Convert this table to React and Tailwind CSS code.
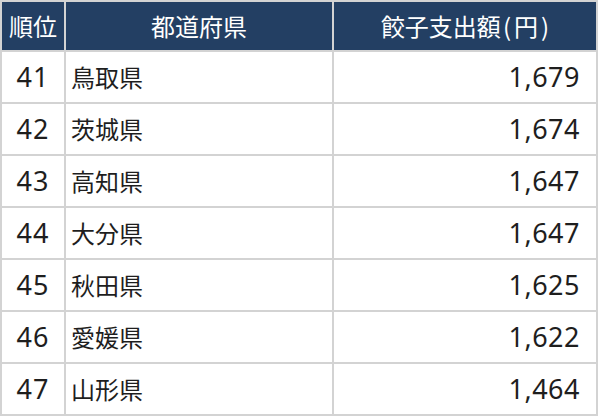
import React from "react";

const rows = [
  ["41", "鳥取県", "1,679"],
  ["42", "茨城県", "1,674"],
  ["43", "高知県", "1,647"],
  ["44", "大分県", "1,647"],
  ["45", "秋田県", "1,625"],
  ["46", "愛媛県", "1,622"],
  ["47", "山形県", "1,464"],
];

export default function App() {
  return (
    <div className="bg-white w-[600px] h-[419px] font-['Noto_Sans','Noto_Sans_CJK_JP',sans-serif]">
      <div className="w-[598px] grid grid-cols-[64px_268px_1fr] border-t-2 border-l-2 border-[#d3d3d3]">
        <div className="h-[50px] bg-[#233f63] text-white text-[24px] flex items-center justify-center border-r-2 border-b-2 border-[#d3d3d3] font-['Noto_Sans_CJK_JP',sans-serif]">順位</div>
        <div className="h-[50px] bg-[#233f63] text-white text-[24px] flex items-center justify-center border-r-2 border-b-2 border-[#d3d3d3] font-['Noto_Sans_CJK_JP',sans-serif]">都道府県</div>
        <div className="h-[50px] bg-[#233f63] text-white text-[24px] flex items-center justify-center border-r-2 border-b-2 border-[#d3d3d3] font-['Noto_Sans_CJK_JP',sans-serif]">
          <span>餃子支出額</span>
          <span className="ml-[2px] mr-[3px]">(</span>
          <span>円</span>
          <span className="ml-[3px]">)</span>
        </div>
        {rows.map(([r, p, v]) => (
          <React.Fragment key={r}>
            <div className="h-[52px] text-[#1e1e1e] text-[27px] flex items-center justify-center border-r-2 border-b-2 border-[#d3d3d3] tracking-[1px]">{r}</div>
            <div className="h-[52px] text-[#1e1e1e] text-[24px] flex items-center pl-[5px] border-r-2 border-b-2 border-[#d3d3d3] font-['Noto_Sans_CJK_JP',sans-serif]">{p}</div>
            <div className="h-[52px] text-[#1e1e1e] text-[27px] flex items-center justify-end pr-[16px] border-r-2 border-b-2 border-[#d3d3d3] tracking-[0.5px]">{v}</div>
          </React.Fragment>
        ))}
      </div>
    </div>
  );
}
